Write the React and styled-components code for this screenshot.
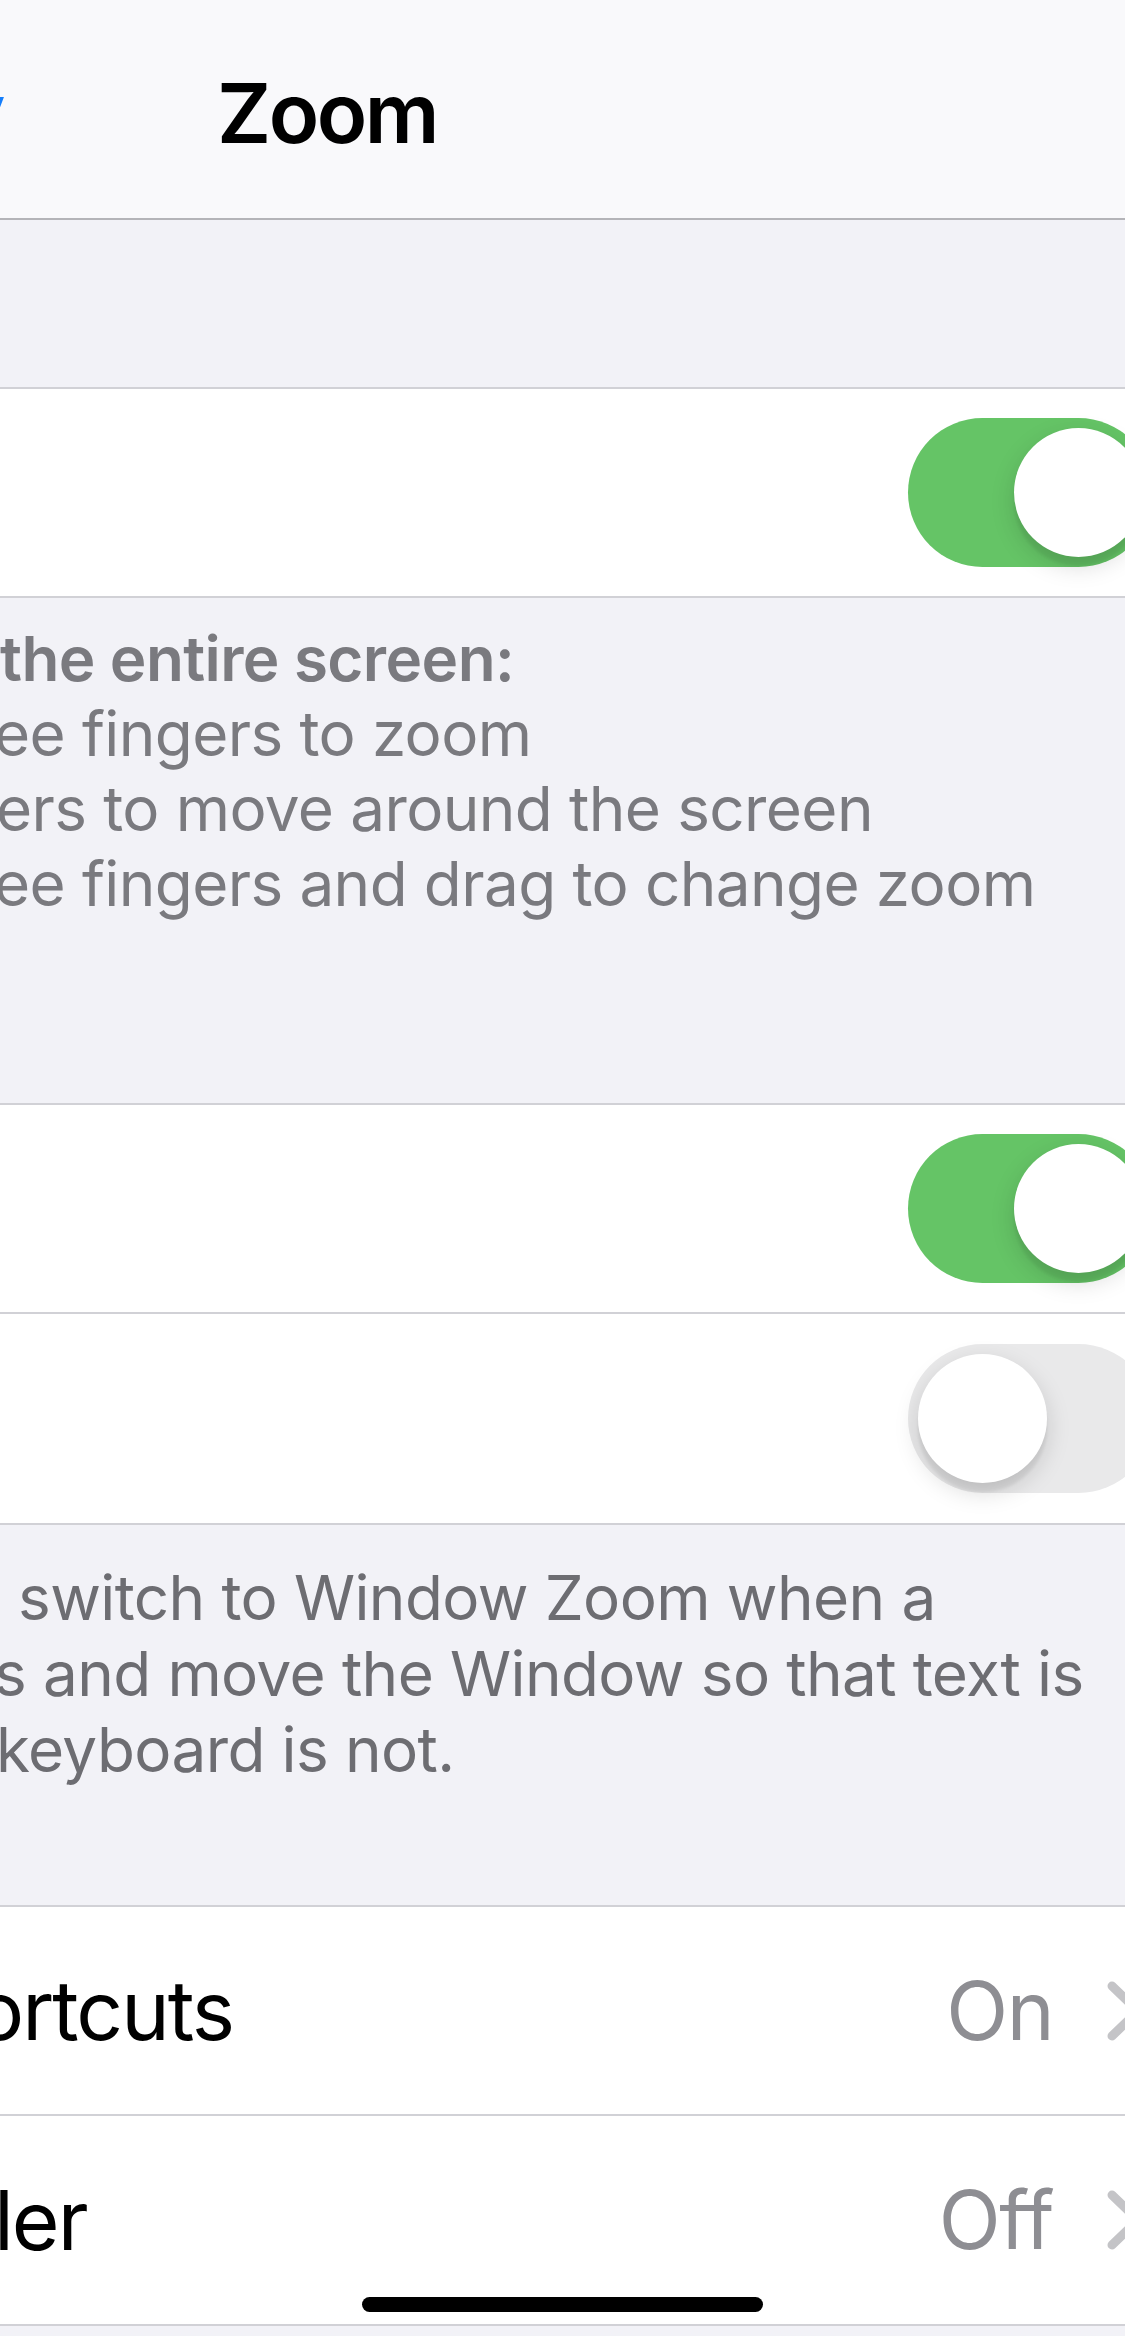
import styled, { createGlobalStyle } from 'styled-components';

const GlobalStyle = createGlobalStyle`
  html, body {
    margin: 0;
    padding: 0;
    background: #f2f2f7;
    overflow: hidden;
  }
  body {
    font-family: Inter, "Noto Sans", "Liberation Sans", sans-serif;
    -webkit-font-smoothing: antialiased;
  }
`;

const Screen = styled.div`
  position: relative;
  width: 1125px;
  height: 2336px;
  overflow: hidden;
  background: #f2f2f7;
  display: flex;
  flex-direction: column;
`;

const NavBar = styled.header`
  height: 220px;
  box-sizing: border-box;
  padding-top: 63px;
  background: #f9f9fb;
  border-bottom: 2px solid #b4b4b8;
  display: flex;
  align-items: flex-start;
`;

const BackLabel = styled.div`
  width: 6px;
  overflow: hidden;
  display: flex;
  justify-content: flex-end;
  font-size: 82px;
  line-height: 100px;
  color: #157efb;
  white-space: nowrap;
`;

const Title = styled.h1`
  margin: 0 0 0 211px;
  font-size: 83px;
  line-height: 100px;
  font-weight: 600;
  letter-spacing: -2.5px;
  color: #000;
`;

const Spacer = styled.div`
  height: ${({ $h }) => $h}px;
`;

const Group = styled.section`
  background: #fff;
  border-top: 2px solid #d1d1d6;
  border-bottom: 2px solid #d1d1d6;
  display: flex;
  flex-direction: column;
`;

const Row = styled.div`
  height: ${({ $h }) => $h || 207}px;
  display: flex;
  align-items: center;
  & + & {
    border-top: 2px solid #d1d1d6;
  }
`;

const Label = styled.span`
  flex: 1;
  margin-left: ${({ $indent }) => $indent || 0}px;
  font-size: 82px;
  color: #000;
  letter-spacing: -2px;
  white-space: nowrap;
`;

const Value = styled.span`
  font-size: 81px;
  color: #8e8e93;
  letter-spacing: -1.5px;
`;

const Chevron = styled.svg`
  flex-shrink: 0;
  margin-left: 52px;
  margin-right: -20px;
`;

const Track = styled.div`
  flex-shrink: 0;
  width: 245px;
  height: 149px;
  box-sizing: border-box;
  padding: 10px;
  margin-right: -28px;
  border-radius: 75px;
  background: ${({ $on }) => ($on ? '#65c466' : '#e9e9ea')};
  display: flex;
  justify-content: ${({ $on }) => ($on ? 'flex-end' : 'flex-start')};
`;

const Knob = styled.div`
  width: 129px;
  height: 129px;
  border-radius: 50%;
  background: #fff;
  box-shadow: 0 9px 24px rgba(0, 0, 0, 0.15), 0 9px 3px rgba(0, 0, 0, 0.06);
`;

const Footer = styled.div`
  padding: ${({ $top }) => $top}px 0 ${({ $bottom }) => $bottom}px;
  font-size: 62px;
  line-height: ${({ $lh }) => $lh || 75}px;
  color: ${({ $tone }) => $tone || '#6d6d72'};
  letter-spacing: -0.6px;
  white-space: nowrap;
`;

const Line = styled.div`
  margin-left: ${({ $indent }) => $indent || 0}px;
  font-weight: ${({ $bold }) => ($bold ? 600 : 400)};
`;

const HomeIndicator = styled.div`
  position: absolute;
  left: 362px;
  top: 2297px;
  width: 401px;
  height: 15px;
  border-radius: 8px;
  background: #000;
`;

const Switch = ({ on }) => (
  <Track $on={on}>
    <Knob />
  </Track>
);

const Disclosure = () => (
  <Chevron width="40" height="62" viewBox="0 0 40 62">
    <path d="M7 6 L33 31 L7 56" fill="none" stroke="#c4c4c7" strokeWidth="9" strokeLinecap="round" strokeLinejoin="round" />
  </Chevron>
);

export default function App() {
  return (
    <Screen>
      <GlobalStyle />
      <NavBar>
        <BackLabel>Accessibility</BackLabel>
        <Title>Zoom</Title>
      </NavBar>

      <Spacer $h={167} />

      <Group>
        <Row>
          <Label />
          <Switch on />
        </Row>
      </Group>

      <Footer $top={23} $bottom={182} $tone="#7a7a7f">
        <Line $bold>the entire screen:</Line>
        <Line $indent={-6}>ee fingers to zoom</Line>
        <Line $indent={-4}>ers to move around the screen</Line>
        <Line $indent={-6}>ee fingers and drag to change zoom</Line>
      </Footer>

      <Group>
        <Row>
          <Label />
          <Switch on />
        </Row>
        <Row $h={209}>
          <Label />
          <Switch on={false} />
        </Row>
      </Group>

      <Footer $top={35} $bottom={117} $lh={76}>
        <Line $indent={18}>switch to Window Zoom when a</Line>
        <Line $indent={-6}>s and move the Window so that text is</Line>
        <Line $indent={-4}>keyboard is not.</Line>
      </Footer>

      <Group>
        <Row>
          <Label $indent={-25}>ortcuts</Label>
          <Value>On</Value>
          <Disclosure />
        </Row>
        <Row $h={208}>
          <Label $indent={-6}>ler</Label>
          <Value>Off</Value>
          <Disclosure />
        </Row>
      </Group>

      <HomeIndicator />
    </Screen>
  );
}
